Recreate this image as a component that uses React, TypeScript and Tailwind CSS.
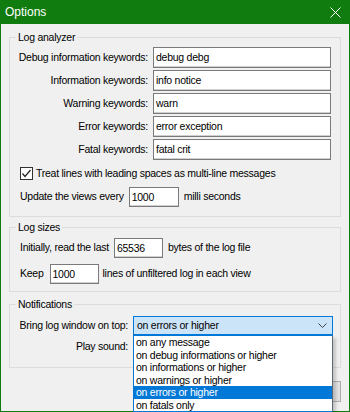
import React from 'react';

const font = { fontFamily: '"Liberation Sans", Arial, sans-serif' };

function TextBox({ value, className = '' }: { value: string; className?: string }) {
  return (
    <div
      className={`bg-white border border-[#7a7a7a] shadow-[inset_0_-1px_0_#d0d0d0] pl-[2px] leading-[18px] whitespace-nowrap overflow-hidden ${className}`}
    >
      {value}
    </div>
  );
}

function GroupBox({ title, className = '', children }: { title: string; className?: string; children: React.ReactNode }) {
  return (
    <fieldset className={`border border-[#dcdcdc] ${className}`}>
      <legend className="ml-[6px] px-[2px] leading-[13px]">{title}</legend>
      {children}
    </fieldset>
  );
}

const OPTIONS = [
  'on any message',
  'on debug informations or higher',
  'on informations or higher',
  'on warnings or higher',
  'on errors or higher',
  'on fatals only',
];

const KEYWORDS: [string, string][] = [
  ['Debug information keywords:', 'debug debg'],
  ['Information keywords:', 'info notice'],
  ['Warning keywords:', 'warn'],
  ['Error keywords:', 'error exception'],
  ['Fatal keywords:', 'fatal crit'],
];

export default function App() {
  const selected = 4;

  return (
    <div
      style={font}
      className="w-[350px] h-[412px] overflow-hidden bg-[#107c10] flex flex-col text-[10.5px] tracking-[-0.25px] text-black"
    >
      {/* TITLE BAR */}
      <div className="h-[24px] shrink-0 flex items-center justify-between pl-[5px] pr-[9px]">
        <span className="text-white text-[12px] tracking-normal">Options</span>
        <svg width="11" height="11" viewBox="0 0 11 11" className="mt-[1px]">
          <path d="M0.5 0.5 L10.5 10.5 M10.5 0.5 L0.5 10.5" stroke="#fff" strokeWidth="1" />
        </svg>
      </div>

      {/* CLIENT AREA */}
      <div className="relative flex-1 mx-[1px] mb-[1px] bg-[#f0f0f0] px-[8px]">
        <GroupBox title="Log analyzer" className="mt-[7px] pr-[9px] pb-[9px]">
          <div className="mt-[3px] grid grid-cols-[138px_178px] gap-x-[5px] gap-y-[2px]">
            {KEYWORDS.map(([label, value]) => (
              <React.Fragment key={label}>
                <div className="text-right leading-[21px]">{label}</div>
                <TextBox value={value} className="h-[21px] leading-[19px]" />
              </React.Fragment>
            ))}
          </div>

          <div className="mt-[7px] pl-[10px] flex items-center gap-[3px] leading-[13px]">
            <div className="w-[13px] h-[13px] border border-[#333] bg-white flex items-center justify-center">
              <svg width="11" height="11" viewBox="0 0 11 11">
                <path d="M1.5 5.5 L4 8.5 L9.5 2" stroke="#222" strokeWidth="1.2" fill="none" />
              </svg>
            </div>
            <span>Treat lines with leading spaces as multi-line messages</span>
          </div>

          <div className="mt-[7px] pl-[10px] flex items-center">
            <span>Update the views every</span>
            <TextBox value="1000" className="ml-[5px] w-[50px] h-[20px]" />
            <span className="ml-[5px]">milli seconds</span>
          </div>
        </GroupBox>

        <GroupBox title="Log sizes" className="mt-[4px] pb-[7px]">
          <div className="mt-[4px] pl-[10px] flex items-center">
            <span>Initially, read the last</span>
            <TextBox value="65536" className="ml-[5px] w-[49px] h-[20px]" />
            <span className="ml-[5px]">bytes of the log file</span>
          </div>
          <div className="mt-[6px] pl-[10px] flex items-center">
            <span>Keep</span>
            <TextBox value="1000" className="ml-[6px] w-[49px] h-[20px]" />
            <span className="ml-[4px]">lines of unfiltered log in each view</span>
          </div>
        </GroupBox>

        <GroupBox title="Notifications" className="mt-[6px] pb-[11px]">
          <div className="mt-[5px] grid grid-cols-[118px_200px] gap-x-[5px] gap-y-[2px]">
            <div className="text-right leading-[19px]">Bring log window on top:</div>
            <div className="h-[19px] bg-[#cce4f7] border border-[#0078d7] flex items-center justify-between pl-[3px] pr-[5px]">
              <span>on errors or higher</span>
              <svg width="9" height="5" viewBox="0 0 9 5">
                <path d="M0.5 0.5 L4.5 4.5 L8.5 0.5" stroke="#444" strokeWidth="1" fill="none" />
              </svg>
            </div>
            <div className="text-right leading-[19px]">Play sound:</div>
            <div className="h-[19px] bg-[#e5e5e5] border border-[#adadad]" />
          </div>
        </GroupBox>

        {/* BUTTONS (mostly hidden behind the open list) */}
        <div className="mt-[13px] flex justify-end">
          <div className="w-[75px] h-[21px] bg-[#e1e1e1] border border-[#adadad] flex items-center justify-center">
            Cancel
          </div>
        </div>

        {/* OPEN DROPDOWN LIST */}
        <div className="absolute left-[132px] top-[311px] w-[200px] bg-white border border-[#0078d7] border-r-[#5a6a7a] shadow-[3px_3px_3px_rgba(0,0,0,0.18)] py-0">
          {OPTIONS.map((opt, i) => (
            <div
              key={opt}
              className={`h-[12.5px] leading-[12.5px] pl-[2px] whitespace-nowrap ${
                i === selected ? 'bg-[#0078d7] text-white' : ''
              }`}
            >
              {opt}
            </div>
          ))}
        </div>
      </div>
    </div>
  );
}
